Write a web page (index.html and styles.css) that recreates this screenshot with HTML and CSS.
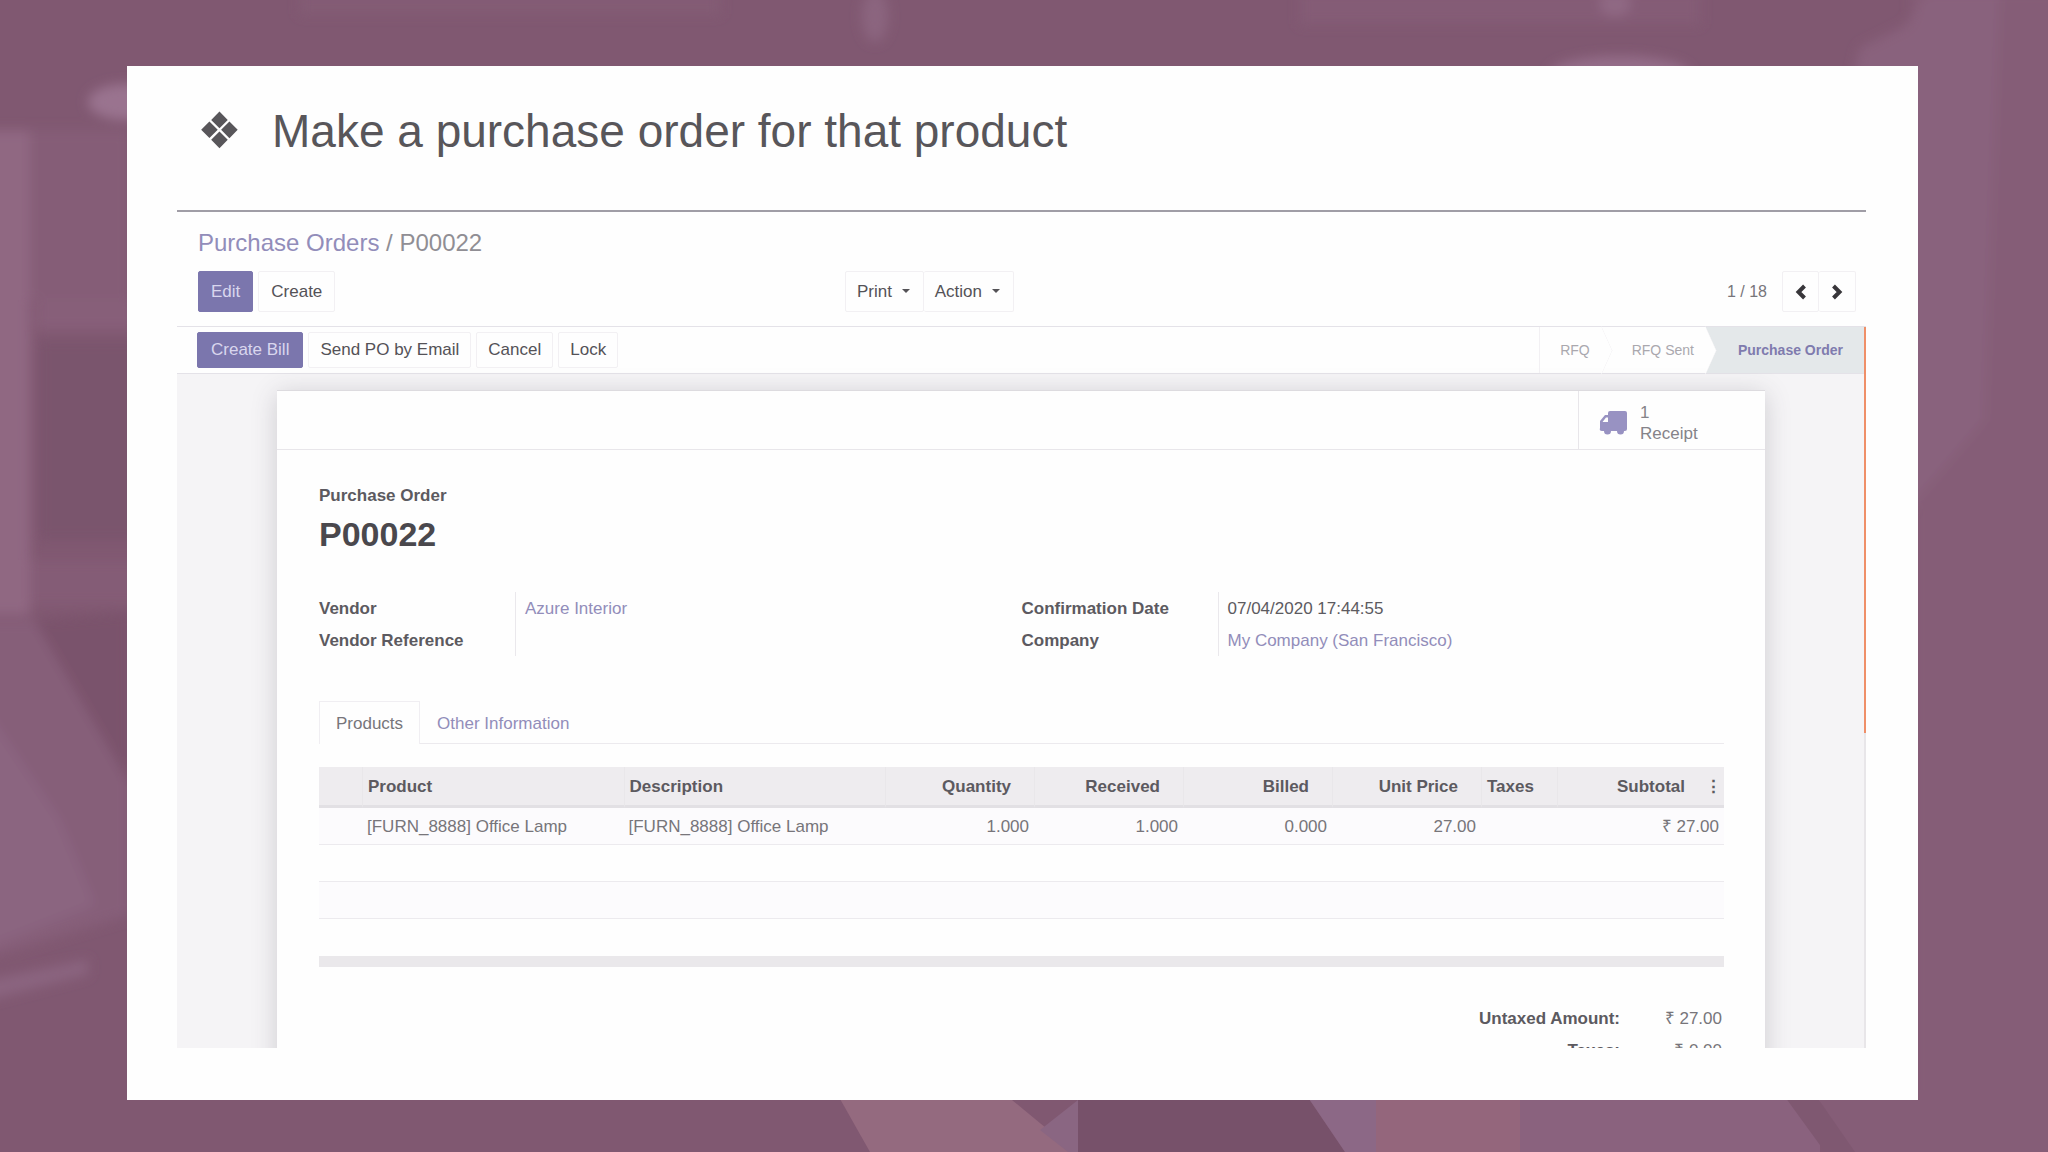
FILE: index.html
```html
<!DOCTYPE html>
<html lang="en">

<head>
    <meta charset="UTF-8">
    <meta name="viewport" content="width=device-width, initial-scale=1.0">
    <title>Make a purchase order for that product</title>
    <link rel="stylesheet" href="styles.css">
</head>

<body>
    <svg class="backdrop" viewBox="0 0 2048 1152" preserveAspectRatio="none" aria-hidden="true">
        <defs>
            <filter id="soft" x="-10%" y="-10%" width="120%" height="120%">
                <feGaussianBlur stdDeviation="6" />
            </filter>
        </defs>
        <rect width="2048" height="1152" fill="#805871" />
        <g filter="url(#soft)">
            <rect x="30" y="130" width="100" height="170" fill="#855d77" />
            <rect x="-20" y="130" width="50" height="485" fill="#906882" />
            <rect x="36" y="298" width="100" height="32" fill="#875f79" />
            <rect x="38" y="340" width="100" height="200" fill="#7a546d" />
            <rect x="30" y="560" width="110" height="45" fill="#845c76" />
            <polygon points="-20,620 40,620 130,780 130,915 -20,960" fill="#865f79" />
            <polygon points="34,620 130,612 130,785" fill="#7a526c" />
            <polygon points="-20,700 60,820 95,905 -20,950" fill="#8b6580" />
            <polygon points="-20,982 88,960 88,974 -20,1002" fill="#8b6580" />
            <ellipse cx="126" cy="102" rx="38" ry="18" fill="#9a738f" />
            <rect x="300" y="-10" width="420" height="24" fill="#835b75" />
            <ellipse cx="875" cy="16" rx="13" ry="26" fill="#8b657f" />
            <rect x="1300" y="-10" width="400" height="34" fill="#845c76" />
            <ellipse cx="1615" cy="4" rx="16" ry="12" fill="#906984" />
            <ellipse cx="1620" cy="74" rx="70" ry="18" fill="#946d89" />
            <rect x="1912" y="-10" width="160" height="1180" fill="#855d77" />
            <polygon points="1930,-10 2000,-10 1985,420 1900,520 1850,90 1860,48 1905,26" fill="#89627d" />
        </g>
        <polygon points="835,1090 1000,1090 1075,1152 870,1152" fill="#946a7f" />
        <polygon points="1040,1130 1078,1100 1078,1152 1068,1152" fill="#8a6682" />
        <polygon points="1078,1090 1303,1090 1345,1152 1078,1152" fill="#77516a" />
        <polygon points="1303,1090 1380,1090 1380,1152 1345,1152" fill="#8c6886" />
        <rect x="1376" y="1090" width="144" height="62" fill="#94667c" />
        <rect x="1520" y="1090" width="300" height="62" fill="#8a627e" />
        <polygon points="1780,1090 1812,1090 1855,1152 1825,1152" fill="#7f5871" />
        <polygon points="1812,1090 1925,1090 1925,1152 1855,1152" fill="#855d77" />
    </svg>

    <main class="slide">
        <h1 class="slide-title"><span class="bullet">❖</span>Make a purchase order for that product</h1>

        <section class="app">
            <header class="control-panel">
                <nav class="breadcrumb">
                    <a href="#">Purchase Orders</a> / <span>P00022</span>
                </nav>
                <div class="control-row">
                    <div class="btn-row">
                        <button class="btn btn-primary">Edit</button>
                        <button class="btn">Create</button>
                    </div>
                    <div class="btn-group">
                        <button class="btn">Print <i class="caret"></i></button>
                        <button class="btn">Action <i class="caret"></i></button>
                    </div>
                    <div class="pager">
                        <span class="pager-count">1 / 18</span>
                        <div class="btn-group">
                            <button class="btn btn-icon" aria-label="Previous">
                                <svg width="12" height="16" viewBox="0 0 12 16"><path d="M9.500 2 3.500 8l6 6" /></svg>
                            </button>
                            <button class="btn btn-icon" aria-label="Next">
                                <svg width="12" height="16" viewBox="0 0 12 16"><path d="M2.500 2l6 6-6 6" /></svg>
                            </button>
                        </div>
                    </div>
                </div>
            </header>

            <div class="statusbar">
                <div class="btn-row">
                    <button class="btn btn-primary">Create Bill</button>
                    <button class="btn">Send PO by Email</button>
                    <button class="btn">Cancel</button>
                    <button class="btn">Lock</button>
                </div>
                <ol class="stages">
                    <li class="stage">RFQ</li>
                    <li class="stage">RFQ Sent</li>
                    <li class="stage current">Purchase Order</li>
                </ol>
            </div>

            <div class="content">
                <article class="sheet">
                    <div class="button-box">
                        <button class="stat-button">
                            <svg class="truck" width="28" height="24" viewBox="0 0 28 24">
                                <path fill-rule="evenodd" d="M11 0h15q2 0 2 2v16q0 2-2 2h-1a3.500 3.500 0 0 1-7 0h-6a3.500 3.500 0 0 1-7 0H3q-3 0-2-3v-7l5-6h3V2q0-2 2-2zM7 6.500 3.500 11H9V6.500z" />
                                <circle cx="8.500" cy="20" r="1.500" />
                                <circle cx="21.500" cy="20" r="1.500" />
                            </svg>
                            <span class="stat-text">1<br>Receipt</span>
                        </button>
                    </div>

                    <div class="sheet-body">
                        <div class="record-label">Purchase Order</div>
                        <h2 class="record-name">P00022</h2>

                        <div class="groups">
                            <dl class="group">
                                <dt>Vendor</dt>
                                <dd><a href="#">Azure Interior</a></dd>
                                <dt>Vendor Reference</dt>
                                <dd></dd>
                            </dl>
                            <dl class="group">
                                <dt>Confirmation Date</dt>
                                <dd>07/04/2020 17:44:55</dd>
                                <dt>Company</dt>
                                <dd><a href="#">My Company (San Francisco)</a></dd>
                            </dl>
                        </div>

                        <nav class="tabs">
                            <a class="tab active" href="#">Products</a>
                            <a class="tab" href="#">Other Information</a>
                        </nav>

                        <table class="lines">
                            <colgroup>
                                <col class="col-handle">
                                <col>
                                <col>
                                <col class="col-number">
                                <col class="col-number">
                                <col class="col-number">
                                <col class="col-number">
                                <col class="col-taxes">
                                <col class="col-subtotal">
                            </colgroup>
                            <thead>
                                <tr>
                                    <th></th>
                                    <th>Product</th>
                                    <th>Description</th>
                                    <th class="number">Quantity</th>
                                    <th class="number">Received</th>
                                    <th class="number">Billed</th>
                                    <th class="number">Unit Price</th>
                                    <th>Taxes</th>
                                    <th class="number last">Subtotal<span class="dots">⋮</span></th>
                                </tr>
                            </thead>
                            <tbody>
                                <tr>
                                    <td></td>
                                    <td>[FURN_8888] Office Lamp</td>
                                    <td>[FURN_8888] Office Lamp</td>
                                    <td class="number">1.000</td>
                                    <td class="number">1.000</td>
                                    <td class="number">0.000</td>
                                    <td class="number">27.00</td>
                                    <td></td>
                                    <td class="number">₹ 27.00</td>
                                </tr>
                                <tr><td colspan="9"></td></tr>
                                <tr><td colspan="9"></td></tr>
                                <tr><td colspan="9"></td></tr>
                            </tbody>
                            <tfoot>
                                <tr><td colspan="9"></td></tr>
                            </tfoot>
                        </table>

                        <dl class="totals">
                            <dt>Untaxed Amount:</dt>
                            <dd>₹ 27.00</dd>
                            <dt>Taxes:</dt>
                            <dd>₹ 0.00</dd>
                        </dl>
                    </div>
                </article>
            </div>
            <div class="scroll-mark"></div>
        </section>
    </main>
</body>

</html>
```
FILE: styles.css
```css
* {
    box-sizing: border-box;
}

body {
    margin: 0;
    height: 100vh;
    padding: 66px 130px 52px 127px;
    display: flex;
    background-color: #805871;
    font-family: "Liberation Sans", Arial, sans-serif;
    font-size: 17px;
    color: #5c5a60;
}

a {
    color: #928dba;
    text-decoration: none;
}

.backdrop {
    position: fixed;
    inset: 0;
    width: 100%;
    height: 100%;
    z-index: -1;
}

.slide {
    flex: 1;
    min-width: 0;
    display: flex;
    flex-direction: column;
    padding: 37px 52px 52px 50px;
    background-color: #fefefe;
}

.slide-title {
    display: flex;
    align-items: center;
    margin: 0 0 51px;
    padding-left: 20px;
    font-size: 46px;
    font-weight: normal;
    line-height: 56px;
    color: #58565a;
}

.bullet {
    width: 75px;
    font-family: "DejaVu Sans", sans-serif;
    font-size: 50px;
}

.app {
    position: relative;
    flex: 1;
    min-height: 0;
    overflow: hidden;
    border-top: 2px solid #a09da6;
}

/* Top bar */
.control-panel {
    padding: 15px 10px 14px 21px;
    border-bottom: 1px solid #e4e2e8;
}

.breadcrumb {
    margin-bottom: 12px;
    font-size: 24px;
    line-height: 32px;
    color: #908e94;
}

.control-row {
    display: grid;
    grid-template-columns: 647px auto 1fr;
    align-items: center;
}

.btn-row {
    display: flex;
    gap: 5px;
}

.btn {
    height: 41px;
    padding: 1px 12px 0;
    border: 1px solid #f2f0f3;
    border-radius: 2px;
    background-color: #fefefe;
    font: inherit;
    color: #545257;
    white-space: nowrap;
}

.btn-primary {
    border-color: #7b76ad;
    background-color: #7b76ad;
    color: #d9d6ee;
}

.btn-group {
    display: flex;
}

.btn-group .btn {
    padding: 1px 11px 0;
}

.btn-group .btn + .btn {
    border-left: 0;
}

.caret {
    display: inline-block;
    margin: 0 2px 4px 5px;
    border: 4px solid transparent;
    border-top-color: #545257;
    border-bottom: 0;
}

.pager {
    display: flex;
    justify-content: flex-end;
    align-items: center;
    gap: 15px;
}

.pager-count {
    font-size: 16px;
    color: #77757a;
}

.btn-icon {
    width: 37px;
}

.btn-icon svg {
    display: block;
    margin: auto;
    fill: none;
    stroke: #38363a;
    stroke-width: 4;
}

/* Status bar */
.statusbar {
    display: flex;
    justify-content: space-between;
    align-items: center;
    height: 47px;
    padding-left: 20px;
    border-bottom: 1px solid #e4e2e8;
}

.statusbar .btn {
    height: 36px;
    padding: 0 11px;
}

.statusbar .btn-primary {
    padding: 0 13px;
}

.stages {
    display: flex;
    align-self: stretch;
    margin: 0;
    padding: 0;
    border-left: 1px solid #f2f0f3;
    list-style: none;
    font-size: 14px;
    line-height: 46px;
    color: #aaa8ae;
}

.stage {
    position: relative;
    padding: 0 12px 0 30px;
}

.stage:first-child {
    padding-left: 20px;
}

.stage:not(.current)::after {
    content: "";
    position: absolute;
    z-index: 1;
    top: 6px;
    right: -17px;
    width: 34px;
    height: 34px;
    border: 1px solid #f0eef1;
    border-width: 1px 1px 0 0;
    background-color: #fefefe;
    clip-path: polygon(0 0, 100% 0, 100% 100%);
    transform: scaleX(.45) rotate(45deg);
}

.stage.current {
    padding: 0 23px 0 32px;
    background-color: #e4e8ea;
    font-weight: bold;
    color: #7f7bae;
}

.scroll-mark {
    position: absolute;
    top: 115px;
    right: 0;
    width: 2px;
    height: 406px;
    background-color: #ef8f68;
}

/* Record */
.content {
    padding: 16px 99px 0 100px;
    border-right: 2px solid #e8e6e9;
    background-color: #f5f4f6;
}

.sheet {
    min-height: 700px;
    background-color: #fefefe;
    border-top: 1px solid #dddbdf;
    box-shadow: 0 4px 24px rgba(70, 64, 76, 0.22);
}

.button-box {
    display: flex;
    justify-content: flex-end;
    height: 59px;
    border-bottom: 1px solid #e8e6ea;
}

.stat-button {
    display: flex;
    align-items: center;
    gap: 13px;
    width: 187px;
    padding: 5px 20px 0;
    border: 0;
    border-left: 1px solid #e8e6ea;
    background: none;
    font: inherit;
    line-height: 21px;
    text-align: left;
    color: #858389;
}

.truck {
    fill: #9892c2;
}

.sheet-body {
    padding: 33px 41px 40px 42px;
}

.record-label {
    font-weight: bold;
    line-height: 26px;
}

.record-name {
    margin: 3px 0 36px;
    font-size: 34px;
    line-height: 44px;
    color: #4a484d;
}

.groups {
    display: grid;
    grid-template-columns: 1fr 1fr;
    margin-bottom: 45px;
}

.group {
    display: grid;
    grid-template-columns: 196px 1fr;
    grid-auto-rows: 32px;
    margin: 0;
    line-height: 33px;
}

.group dt {
    font-weight: bold;
}

.group dd {
    margin: 0;
    padding-left: 9px;
    border-left: 1px solid #eae8ec;
}

.tabs {
    display: flex;
    height: 43px;
    margin-bottom: 23px;
    border-bottom: 1px solid #eceaee;
    line-height: 43px;
}

.tab {
    padding: 0 16px;
    border: 1px solid transparent;
    border-bottom: 0;
}

.tab.active {
    height: 43px;
    border-color: #f0eef2;
    background-color: #fefefe;
    color: #77757a;
}

.lines {
    width: 100%;
    table-layout: fixed;
    border-collapse: separate;
    border-spacing: 0;
    line-height: 20px;
}

.col-handle {
    width: 43px;
}

.col-number {
    width: 149px;
}

.col-taxes {
    width: 76px;
}

.col-subtotal {
    width: 167px;
}

.lines th {
    position: relative;
    height: 41px;
    padding: 2px 6px 0 5px;
    border-bottom: 3px solid #e2e0e4;
    background-color: #eeecef;
    text-align: left;
}

.lines th + th {
    border-left: 1px solid #e9e7ea;
}

.lines td {
    height: 37px;
    padding: 2px 5px 0;
    border-bottom: 1px solid #eceaee;
    color: #77757a;
}

.lines tbody tr:nth-child(odd) td {
    background-color: #fcfbfd;
}

.lines tbody tr:last-child td {
    border-bottom: 0;
}

.lines .number {
    text-align: right;
}

.lines th.number {
    padding-right: 23px;
}

.lines th.last {
    padding-right: 39px;
}

.dots {
    position: absolute;
    right: 2px;
}

.lines tfoot td {
    height: 11px;
    border: 0;
    background-color: #eae8eb;
}

.totals {
    display: grid;
    grid-template-columns: 1fr 102px;
    margin: 36px 0 0;
    padding-right: 2px;
    line-height: 32px;
    text-align: right;
}

.totals dt {
    font-weight: bold;
}

.totals dd {
    margin: 0;
    color: #77757a;
}
```
